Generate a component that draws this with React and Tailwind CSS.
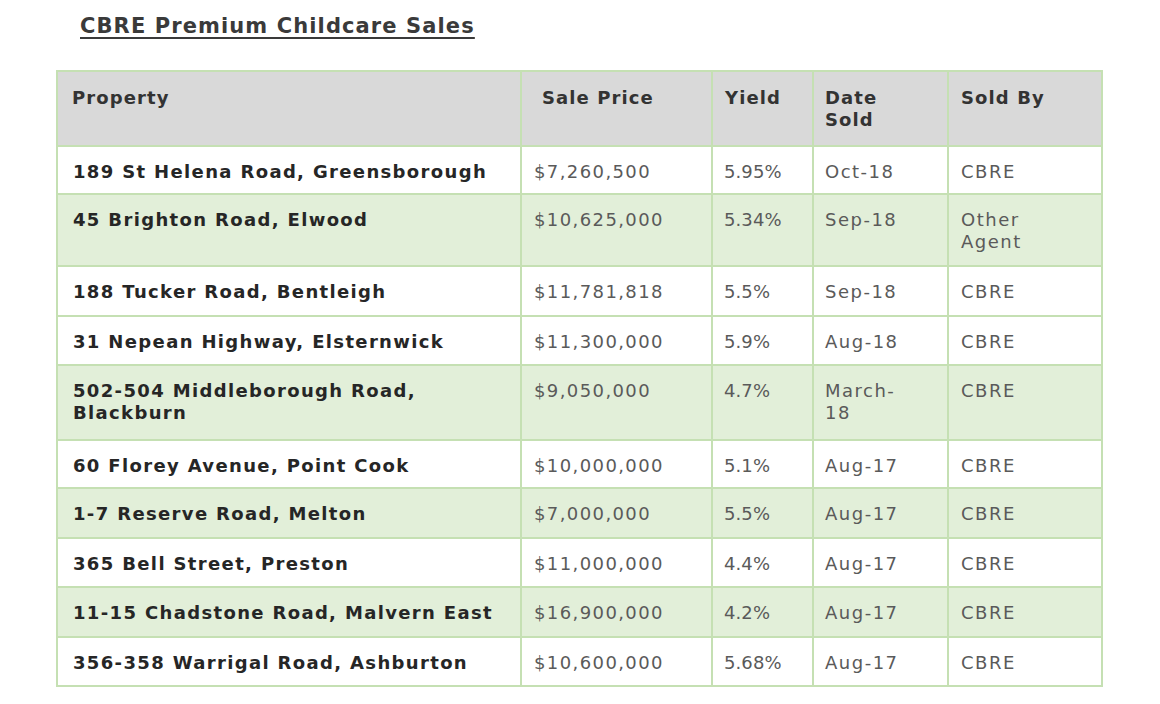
import React from "react";

const rows = [
  { p: "189 St Helena Road, Greensborough", price: "$7,260,500", y: "5.95%", d: "Oct-18", s: "CBRE", h: "h-[48px]", g: false },
  { p: "45 Brighton Road, Elwood", price: "$10,625,000", y: "5.34%", d: "Sep-18", s: "Other\nAgent", h: "h-[72px]", g: true },
  { p: "188 Tucker Road, Bentleigh", price: "$11,781,818", y: "5.5%", d: "Sep-18", s: "CBRE", h: "h-[50px]", g: false },
  { p: "31 Nepean Highway, Elsternwick", price: "$11,300,000", y: "5.9%", d: "Aug-18", s: "CBRE", h: "h-[49px]", g: false },
  { p: "502-504  Middleborough Road,\nBlackburn", price: "$9,050,000", y: "4.7%", d: "March-\n18", s: "CBRE", h: "h-[75px]", g: true },
  { p: "60 Florey Avenue, Point Cook", price: "$10,000,000", y: "5.1%", d: "Aug-17", s: "CBRE", h: "h-[48px]", g: false },
  { p: "1-7 Reserve Road, Melton", price: "$7,000,000", y: "5.5%", d: "Aug-17", s: "CBRE", h: "h-[50px]", g: true },
  { p: "365 Bell Street, Preston", price: "$11,000,000", y: "4.4%", d: "Aug-17", s: "CBRE", h: "h-[49px]", g: false },
  { p: "11-15 Chadstone Road, Malvern East", price: "$16,900,000", y: "4.2%", d: "Aug-17", s: "CBRE", h: "h-[50px]", g: true },
  { p: "356-358  Warrigal Road, Ashburton", price: "$10,600,000", y: "5.68%", d: "Aug-17", s: "CBRE", h: "h-[49px]", g: false },
];

const font = { fontFamily: '"DejaVu Sans", "Liberation Sans", sans-serif' };

export default function App() {
  return (
    <div className="w-[1160px] h-[704px] bg-white overflow-hidden" style={font}>
      <div className="pl-[80px] pt-[13px] h-[70px]">
        <span className="text-[21px] font-bold text-[#3a3a3a] underline underline-offset-[4px] decoration-[1.5px] tracking-[1.1px] leading-[26px]">
          CBRE Premium Childcare Sales
        </span>
      </div>
      <div className="pl-[56px]">
        <table className="border-collapse border-2 border-[#c5e0b3] table-fixed w-[1045px]">
          <colgroup>
            <col className="w-[464px]" />
            <col className="w-[191px]" />
            <col className="w-[101px]" />
            <col className="w-[135px]" />
            <col className="w-[154px]" />
          </colgroup>
          <thead>
            <tr className="h-[75px] bg-[#d9d9d9] text-[18px] font-bold text-[#333] leading-[22px] tracking-[1.1px]">
              <th className="border-2 border-[#c5e0b3] align-top text-left pl-[14px] pt-[15px]">Property</th>
              <th className="border-2 border-[#c5e0b3] align-top text-left pl-[20px] pt-[15px]">Sale Price</th>
              <th className="border-2 border-[#c5e0b3] align-top text-left pl-[12px] pt-[15px]">Yield</th>
              <th className="border-2 border-[#c5e0b3] align-top text-left pl-[11px] pt-[15px]">Date<br />Sold</th>
              <th className="border-2 border-[#c5e0b3] align-top text-left pl-[12px] pt-[15px]">Sold By</th>
            </tr>
          </thead>
          <tbody>
            {rows.map((r, i) => (
              <tr key={i} className={`${r.h} ${r.g ? "bg-[#e2efd9]" : "bg-white"} leading-[22px] align-top text-[18px]`}>
                <td className="border-2 border-[#c5e0b3] pl-[15px] pt-[14px] font-bold text-[#262626] whitespace-pre-line tracking-[1.35px]">{r.p}</td>
                <td className="border-2 border-[#c5e0b3] pl-[12px] pt-[14px] text-[#5a5a5a] tracking-[1.4px]">{r.price}</td>
                <td className="border-2 border-[#c5e0b3] pl-[11px] pt-[14px] text-[#5a5a5a] tracking-[0.1px]">{r.y}</td>
                <td className="border-2 border-[#c5e0b3] pl-[11px] pt-[14px] text-[#5a5a5a] whitespace-pre-line tracking-[1.5px]">{r.d}</td>
                <td className="border-2 border-[#c5e0b3] pl-[12px] pt-[14px] text-[#5a5a5a] whitespace-pre-line tracking-[1.5px]">{r.s}</td>
              </tr>
            ))}
          </tbody>
        </table>
      </div>
    </div>
  );
}
